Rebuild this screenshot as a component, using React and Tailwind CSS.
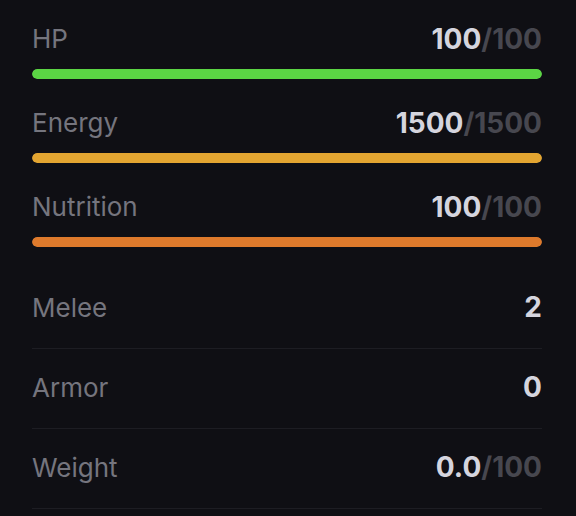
import React from 'react';

const bars = [
  { label: "HP", value: 100, max: 100, color: "bg-[#5bd544]" },
  { label: "Energy", value: 1500, max: 1500, color: "bg-[#e3a531]" },
  { label: "Nutrition", value: 100, max: 100, color: "bg-[#de7a2c]" },
];

const stats = [
  { label: "Melee", value: "2" },
  { label: "Armor", value: "0" },
  { label: "Weight", value: "0.0", max: "100" },
];

const App = () => {
  return (
    <div className="min-h-screen w-[576px] h-[516px] overflow-hidden bg-[#0f0f14] font-['Inter',sans-serif] pl-[32px] pr-[34px] pt-[24px]">
      {/* --- BARS --- */}
      <div className="flex flex-col gap-[29px]">
        {bars.map((b) => (
          <div key={b.label}>
            <div className="flex justify-between items-center h-[30px] leading-[30px]">
              <span className="text-[26px] text-[#75757e]">{b.label}</span>
              <span className="text-[28px] font-bold">
                <span className="text-[#d5d5de]">{b.value}</span>
                <span className="text-[#47474f]">/{b.max}</span>
              </span>
            </div>
            <div className="mt-[15px] h-[10px] rounded-full bg-[#25252c] overflow-hidden">
              <div className={`h-full rounded-full ${b.color}`} style={{ width: `${(b.value / b.max) * 100}%` }}></div>
            </div>
          </div>
        ))}
      </div>

      {/* --- STATS --- */}
      <div className="mt-[22px] flex flex-col">
        {stats.map((s) => (
          <div key={s.label} className="h-[80px] pb-[3px] flex justify-between items-center border-b border-[#1d1d23]">
            <span className="text-[26px] text-[#75757e]">{s.label}</span>
            <span className="text-[28px] font-bold">
              <span className="text-[#d5d5de]">{s.value}</span>
              {s.max && <span className="text-[#47474f]">/{s.max}</span>}
            </span>
          </div>
        ))}
      </div>
    </div>
  );
};

export default App;
